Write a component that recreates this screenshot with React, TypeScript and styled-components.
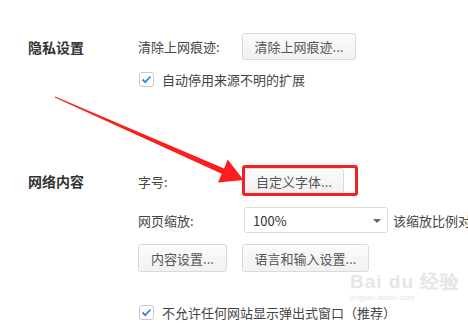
import React from 'react'
import styled, { createGlobalStyle } from 'styled-components'

const GlobalStyle = createGlobalStyle`
  html, body {
    margin: 0;
    padding: 0;
    background: #fff;
  }
  body {
    font-family: "Microsoft YaHei", "Noto Sans CJK SC", "Noto Sans", sans-serif;
    color: #333;
  }
`

const Page = styled.div`
  position: relative;
  width: 468px;
  height: 323px;
  overflow: hidden;
  padding-top: 33px;
  box-sizing: border-box;
  white-space: nowrap;
`

const Section = styled.section<{ $mt?: number }>`
  display: flex;
  margin-top: ${(p) => p.$mt ?? 0}px;
`

const Heading = styled.h3<{ $h: number }>`
  width: 110px;
  height: ${(p) => p.$h}px;
  margin: 0;
  padding-left: 28px;
  flex-shrink: 0;
  display: flex;
  align-items: center;
  font-size: 14px;
  font-weight: bold;
  color: #333;
`

const Body = styled.div`
  display: flex;
  flex-direction: column;
`

const Row = styled.div<{ $h: number; $mt?: number }>`
  display: flex;
  align-items: center;
  height: ${(p) => p.$h}px;
  margin-top: ${(p) => p.$mt ?? 0}px;
`

const Label = styled.span`
  width: 104px;
  font-size: 13px;
  color: #444;
`

const Button = styled.button<{ $w: number; $h?: number; $mr?: number }>`
  width: ${(p) => p.$w}px;
  height: ${(p) => p.$h ?? 27}px;
  padding: 0;
  border: 1px solid #dadada;
  border-radius: 3px;
  background: linear-gradient(#fbfbfb, #f1f1f1);
  font-family: inherit;
  font-size: 13px;
  color: #555;
  margin-right: ${(p) => p.$mr ?? 14}px;
`

const Highlight = styled.span`
  position: relative;
  display: inline-flex;
  margin-left: 2px;

  &::after {
    content: '';
    position: absolute;
    left: -2px;
    top: -3px;
    right: 0px;
    bottom: -2px;
    border: 3px solid #f52020;
    border-radius: 3px;
  }
`

const Select = styled.div`
  position: relative;
  width: 144px;
  height: 26px;
  margin-left: 2px;
  box-sizing: border-box;
  border: 1px solid #dcdcdc;
  border-radius: 3px;
  display: flex;
  align-items: center;
  padding-left: 8px;
  font-size: 13px;
  color: #333;

  &::after {
    content: '';
    position: absolute;
    right: 6px;
    top: 11px;
    border-left: 4px solid transparent;
    border-right: 4px solid transparent;
    border-top: 4px solid #666;
  }
`

const Note = styled.span`
  margin-left: 5px;
  font-size: 13px;
  color: #444;
`

const Check = styled.span`
  width: 15px;
  height: 15px;
  margin-left: 1px;
  box-sizing: border-box;
  border: 1px solid #c6c6c6;
  border-radius: 3px;
  background: #fff;
  display: inline-flex;
  align-items: center;
  justify-content: center;
`

const CheckText = styled.span`
  margin-left: 8px;
  font-size: 13px;
  color: #444;
`

const Overlay = styled.svg`
  position: absolute;
  left: 0;
  top: 0;
  pointer-events: none;
`

// faint site watermark
const Watermark = styled.div`
  position: absolute;
  left: 350px;
  top: 272px;
  color: #e6e6e6;
  font-family: "Liberation Sans", Arial, sans-serif;
  line-height: 1;
  pointer-events: none;
`

const MarkTop = styled.div`
  font-size: 19px;
  font-weight: bold;
  letter-spacing: 1px;
`

const MarkBottom = styled.div`
  margin-top: 3px;
  font-size: 8px;
`

function CheckBox() {
  return (
    <Check>
      <svg width="11" height="9" viewBox="0 0 11 9">
        <path d="M1.5 4.5 L4.2 7.2 L9.5 1.5" fill="none" stroke="#2f8ae8" strokeWidth="1.8" />
      </svg>
    </Check>
  )
}

export default function App() {
  return (
    <>
      <GlobalStyle />
      <Page>
        <Section>
          <Heading $h={27}>隐私设置</Heading>
          <Body>
            <Row $h={27}>
              <Label>清除上网痕迹:</Label>
              <Button $w={114}>清除上网痕迹...</Button>
            </Row>
            <Row $h={15} $mt={12}>
              <CheckBox />
              <CheckText>自动停用来源不明的扩展</CheckText>
            </Row>
          </Body>
        </Section>

        <Section $mt={81}>
          <Heading $h={26}>网络内容</Heading>
          <Body>
            <Row $h={26}>
              <Label>字号:</Label>
              <Highlight>
                <Button $w={100} $h={26}>自定义字体...</Button>
              </Highlight>
            </Row>
            <Row $h={26} $mt={13}>
              <Label>网页缩放:</Label>
              <Select>100%</Select>
              <Note>该缩放比例对所有网页有效</Note>
            </Row>
            <Row $h={28} $mt={11}>
              <Button $w={89} $h={28} $mr={15}>内容设置...</Button>
              <Button $w={127} $h={28}>语言和输入设置...</Button>
            </Row>
            <Row $h={15} $mt={33}>
              <CheckBox />
              <CheckText>不允许任何网站显示弹出式窗口（推荐）</CheckText>
            </Row>
          </Body>
        </Section>

        <Watermark>
          <MarkTop>Bai du 经验</MarkTop>
          <MarkBottom>jingyan.baidu.com</MarkBottom>
        </Watermark>

        <Overlay width="468" height="323" viewBox="0 0 468 323">
          <polygon
            points="54.8,97.6 221.7,173.8 218,182.6 243.5,180 227.7,159.6 224.1,168.4 55.2,96.4"
            fill="#fa1e1e"
          />
        </Overlay>
      </Page>
    </>
  )
}
